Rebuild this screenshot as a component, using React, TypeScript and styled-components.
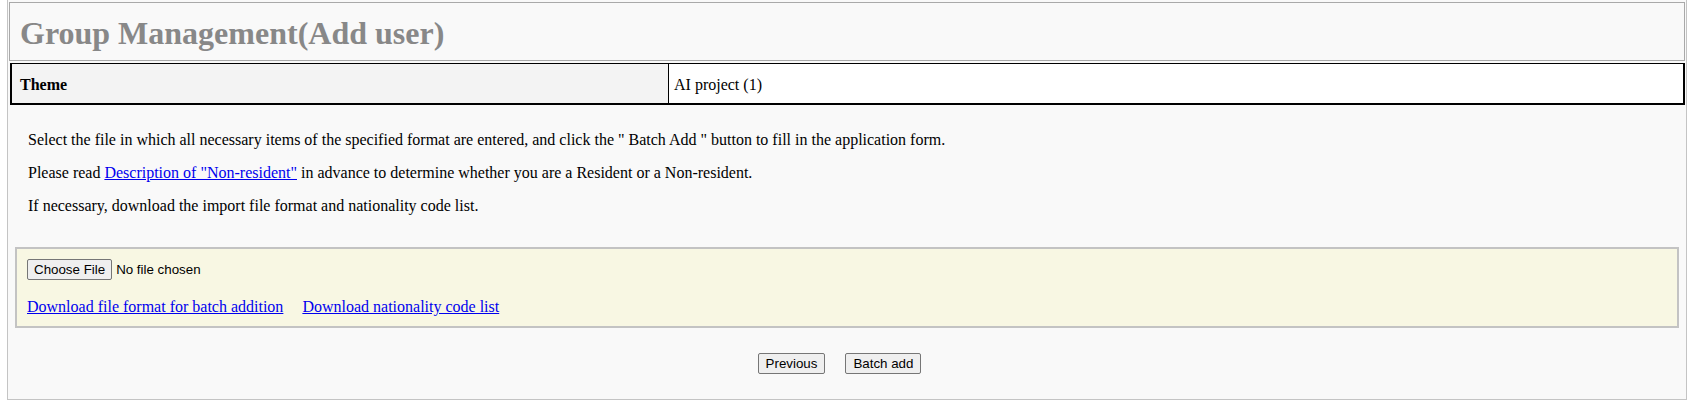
import React from "react";
import styled, { createGlobalStyle } from "styled-components";

const GlobalStyle = createGlobalStyle`
  html, body {
    margin: 0;
    padding: 0;
    background: #ffffff;
  }
  body {
    font-family: "Liberation Serif", "Times New Roman", serif;
    color: #000;
  }
`;

const Page = styled.div`
  padding-left: 7px;
  width: 1680px;
`;

const Frame = styled.div`
  border: 1px solid #c4c4c4;
  border-top: none;
  background: #f9f9f9;
  padding: 2px 1px 25px 1px;
`;

const Header = styled.div`
  height: 57px;
  border: 1px solid #a9a9a9;
  background: #f9f9f9;
  display: flex;
  align-items: center;
  padding-left: 10px;
  h1 {
    margin: 0;
    font-family: "Liberation Serif", "Times New Roman", serif;
    font-size: 32px;
    font-weight: 700;
    color: #888888;
    line-height: 1;
    padding-top: 2px;
  }
`;

const InfoTable = styled.div`
  margin: 2px 0 0 1px;
  display: grid;
  grid-template-columns: 656px 1fr;
  border: 2px solid #000;
  border-top-width: 1px;
  height: 39px;
`;

const Cell = styled.div<{ $head?: boolean }>`
  display: flex;
  align-items: center;
  font-size: 16px;
  background: ${(p) => (p.$head ? "#f3f3f3" : "#ffffff")};
  font-weight: ${(p) => (p.$head ? 700 : 400)};
  padding-left: ${(p) => (p.$head ? "8px" : "5px")};
  border-left: ${(p) => (p.$head ? "none" : "1px solid #000")};
  padding-top: 2px;
`;

const Intro = styled.div`
  padding: 26px 0 17px 19px;
  p {
    margin: 0 0 15px;
    font-size: 16px;
    line-height: 18px;
  }
  a {
    color: #0000ee;
  }
`;

const UploadBox = styled.div`
  margin: 0 6px;
  border: 2px solid #c3c3c3;
  background: #f8f7e3;
  padding: 10px 10px 10px 10px;
`;

const FileInput = styled.input`
  font-family: "Liberation Sans", Arial, sans-serif;
  font-size: 13.33px;
  color: #000;
  height: 21px;
  &::file-selector-button {
    font-family: "Liberation Sans", Arial, sans-serif;
    font-size: 13.33px;
    height: 21px;
    padding: 1px 6px;
    margin-right: 4px;
    border: 1px solid #767676;
    border-radius: 2px;
    background: #efefef;
    color: #000;
  }
`;

const LinkRow = styled.div`
  margin-top: 18px;
  display: flex;
  gap: 19px;
  font-size: 16px;
  line-height: 18px;
  a {
    color: #0000ee;
  }
`;

const ButtonRow = styled.div`
  margin-top: 25px;
  display: flex;
  justify-content: center;
  gap: 20px;
  padding-right: 15px;
`;

const Button = styled.button`
  font-family: "Liberation Sans", Arial, sans-serif;
  font-size: 13.33px;
  height: 21px;
  padding: 1px 7px;
  border: 1px solid #767676;
  border-radius: 2px;
  background: #efefef;
  color: #000;
`;

export default function App() {
  return (
    <Page>
      <GlobalStyle />
      <Frame>
        <Header>
          <h1>Group Management(Add user)</h1>
        </Header>
        <InfoTable>
          <Cell $head>Theme</Cell>
          <Cell>AI project (1)</Cell>
        </InfoTable>
        <Intro>
          <p>
            Select the file in which all necessary items of the specified format are entered, and
            click the " Batch Add " button to fill in the application form.
          </p>
          <p>
            Please read <a href="#">Description of "Non-resident"</a> in advance to determine
            whether you are a Resident or a Non-resident.
          </p>
          <p>If necessary, download the import file format and nationality code list.</p>
        </Intro>
        <UploadBox>
          <FileInput type="file" />
          <LinkRow>
            <a href="#">Download file format for batch addition</a>
            <a href="#">Download nationality code list</a>
          </LinkRow>
        </UploadBox>
        <ButtonRow>
          <Button>Previous</Button>
          <Button>Batch add</Button>
        </ButtonRow>
      </Frame>
    </Page>
  );
}
